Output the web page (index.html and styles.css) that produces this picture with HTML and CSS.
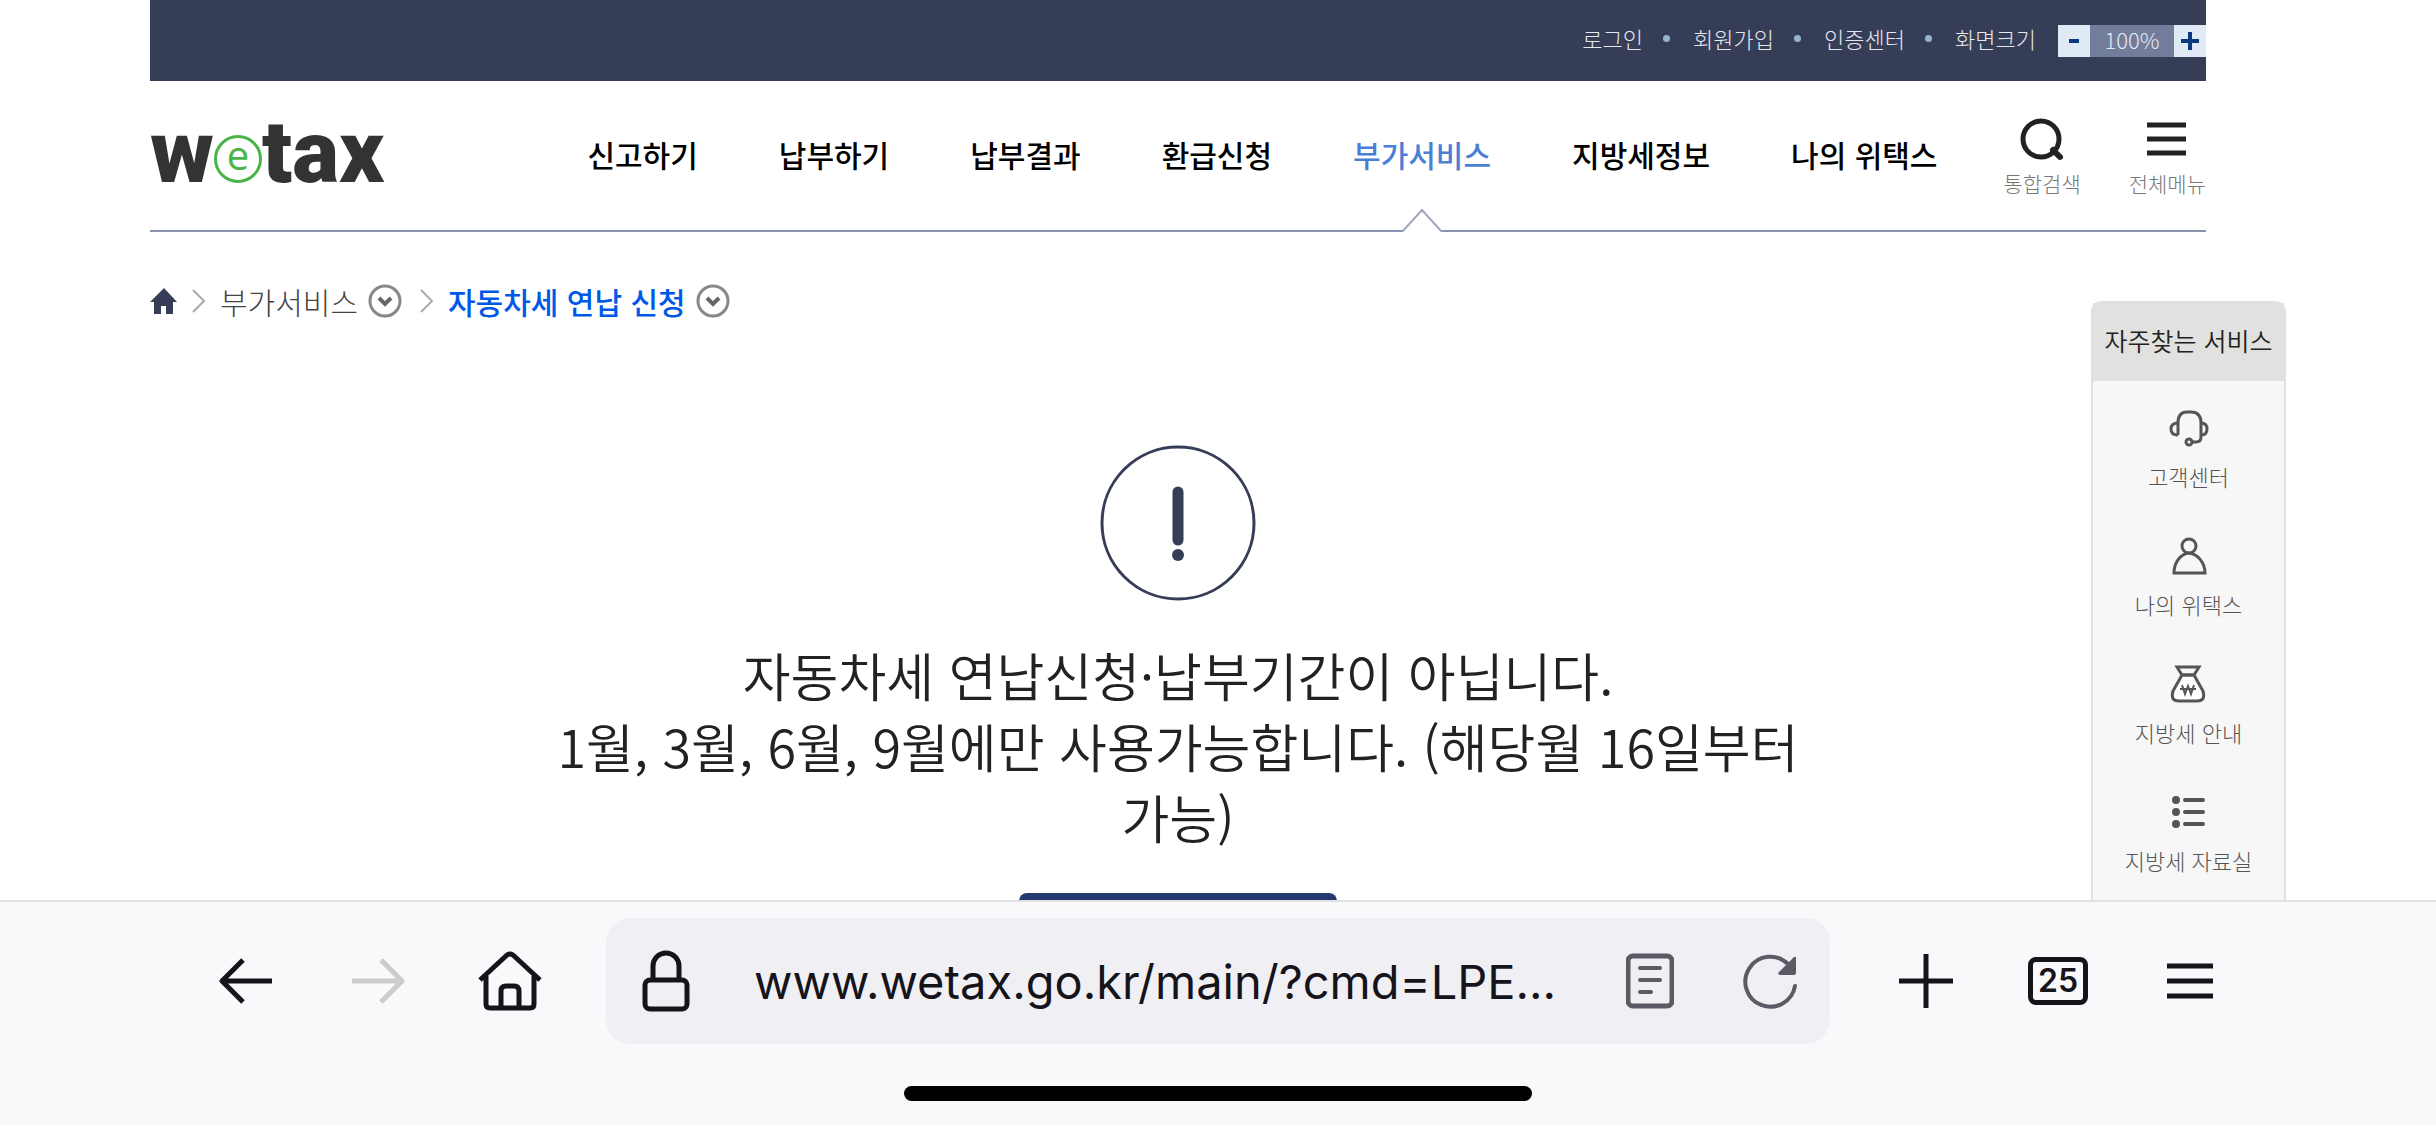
FILE: index.html
```html
<!DOCTYPE html>
<html lang="ko">
<head>
  <meta charset="UTF-8">
  <meta name="viewport" content="width=device-width, initial-scale=1">
  <title>위택스 - 자동차세 연납 신청</title>
  <link rel="stylesheet" href="styles.css">
</head>
<body>

  <div class="page">
    <div class="top-bar">
      <ul class="top-links">
        <li><a href="#">로그인</a></li>
        <li><a href="#">회원가입</a></li>
        <li><a href="#">인증센터</a></li>
        <li>화면크기</li>
      </ul>
      <div class="zoom-control">
        <button aria-label="축소"><svg width="12" height="32" viewBox="0 0 12 32"><path d="M1 16h10" stroke="#0b3a80" stroke-width="4"/></svg></button>
        <span>100%</span>
        <button aria-label="확대"><svg width="20" height="32" viewBox="0 0 20 32"><path d="M1 16h18M10 7v18" stroke="#0b3a80" stroke-width="4"/></svg></button>
      </div>
    </div>

    <header>
      <a href="#" class="logo" aria-label="wetax"><span>w</span><span class="logo-e">e</span><span>tax</span></a>
      <nav>
        <a href="#">신고하기</a>
        <a href="#">납부하기</a>
        <a href="#">납부결과</a>
        <a href="#">환급신청</a>
        <a href="#" class="active">부가서비스
          <svg class="marker" width="44" height="24" viewBox="0 0 44 24"><path d="M2 24L22 2l20 22" fill="#fff" stroke="#a0a6bd" stroke-width="2"/></svg>
        </a>
        <a href="#">지방세정보</a>
        <a href="#">나의 위택스</a>
      </nav>
      <div class="tools">
        <button>
          <svg width="46" height="44" viewBox="0 0 46 44" fill="none" stroke="#222" stroke-width="5"><circle cx="22" cy="21" r="18"/><path d="M34 32l7 7" stroke-width="6" stroke-linecap="round"/></svg>
          통합검색
        </button>
        <button>
          <svg width="40" height="44" viewBox="0 0 40 44" stroke="#222" stroke-width="5"><path d="M0 7h39M0 21h39M0 35h39"/></svg>
          전체메뉴
        </button>
      </div>
    </header>

    <div class="breadcrumb">
      <a href="#" class="home" aria-label="홈"><svg width="28" height="28" viewBox="0 0 28 28"><path d="M14 1L0 15h4v12h7v-8h5v8h7V15h4z" fill="#363d56"/></svg></a>
      <svg width="14" height="24" viewBox="0 0 14 24" fill="none" stroke="#aaa" stroke-width="2"><path d="M1 1l11 11L1 23"/></svg>
      <a href="#">부가서비스</a>
      <button aria-label="메뉴 열기"><svg width="34" height="34" viewBox="0 0 34 34" fill="none"><circle cx="17" cy="17" r="15" stroke="#888" stroke-width="3"/><path d="M11 14l6 6 6-6" stroke="#666" stroke-width="4"/></svg></button>
      <svg width="14" height="24" viewBox="0 0 14 24" fill="none" stroke="#aaa" stroke-width="2"><path d="M1 1l11 11L1 23"/></svg>
      <a href="#" class="current">자동차세 연납 신청</a>
      <button aria-label="메뉴 열기"><svg width="34" height="34" viewBox="0 0 34 34" fill="none"><circle cx="17" cy="17" r="15" stroke="#888" stroke-width="3"/><path d="M11 14l6 6 6-6" stroke="#666" stroke-width="4"/></svg></button>
    </div>

    <main>
      <svg width="156" height="156" viewBox="0 0 156 156" fill="none" stroke="#363d56"><circle cx="78" cy="78" r="76" stroke-width="3"/><path d="M78 47v48" stroke-width="11" stroke-linecap="round"/><circle cx="78" cy="110" r="6" fill="#363d56" stroke="none"/></svg>
      <p>자동차세 연납신청·납부기간이 아닙니다.<br>1월, 3월, 6월, 9월에만 사용가능합니다. (해당월 16일부터<br>가능)</p>
      <button class="confirm" aria-label="확인"></button>
    </main>

    <aside>
      <h2>자주찾는 서비스</h2>
      <ul>
        <li><a href="#">
          <svg width="40" height="38" viewBox="0 0 40 38" fill="none" stroke="#555" stroke-width="3"><path d="M9 26V14Q9 3 18 3h4q10 0 10 11v14q0 5-5 5h-4"/><path d="M9 14q-7 0-7 6t7 6M32 14q6 0 6 6t-6 6"/><circle cx="20" cy="33" r="3"/></svg>
          고객센터
        </a></li>
        <li><a href="#">
          <svg width="40" height="38" viewBox="0 0 40 38" fill="none" stroke="#555" stroke-width="3"><circle cx="20" cy="9" r="7"/><path d="M20 16C11 17 5 26 5 36h31C36 26 29 17 20 16z"/></svg>
          나의 위택스
        </a></li>
        <li><a href="#">
          <svg width="40" height="38" viewBox="0 0 40 38" fill="none" stroke="#555" stroke-width="3"><path d="M13 10L4 26q-3 10 6 10h18q9 0 6-10l-9-16z" fill="#fff"/><path d="M8 2h22l-5 8H13z"/><path d="M13 20l3 9 3-8 3 8 3-9M11 24h16" stroke-width="2"/></svg>
          지방세 안내
        </a></li>
        <li><a href="#">
          <svg width="40" height="38" viewBox="0 0 40 38"><path d="M16 7h18M16 19h18M16 31h18" stroke="#555" stroke-width="4" stroke-linecap="round"/><g fill="#555"><circle cx="7" cy="7" r="4"/><circle cx="7" cy="19" r="4"/><circle cx="7" cy="31" r="4"/></g></svg>
          지방세 자료실
        </a></li>
      </ul>
    </aside>
  </div>

  <!-- browser toolbar -->
  <div class="browser">
    <div class="controls">
      <button aria-label="뒤로"><svg width="54" height="48" viewBox="0 0 54 48" fill="none" stroke="#15141a" stroke-width="5" stroke-linejoin="round"><path d="M53 24H4M24 3L3 24l21 21"/></svg></button>
      <button aria-label="앞으로"><svg width="54" height="48" viewBox="0 0 54 48" fill="none" stroke="#ccc" stroke-width="5" stroke-linejoin="round"><path d="M1 24h49M30 3l21 21-21 21"/></svg></button>
      <button aria-label="홈"><svg width="64" height="60" viewBox="0 0 64 60" fill="none" stroke="#15141a" stroke-width="5" stroke-linejoin="round"><path d="M2 29L29 4q3-2 6 0l27 25"/><path d="M8 25v28q0 4 4 4h40q4 0 4-4V25M23 57V40q0-5 5-5h8q5 0 5 5v17"/></svg></button>
      <div class="url-box">
        <button aria-label="보안 연결"><svg width="48" height="62" viewBox="0 0 48 62" fill="none" stroke="#15141a" stroke-width="5"><rect x="3" y="30" width="42" height="29" rx="5"/><path d="M11 30V16a13 13 0 0 1 26 0v14"/></svg></button>
        <input type="text" aria-label="주소" value="www.wetax.go.kr/main/?cmd=LPE...">
        <button aria-label="읽기 모드"><svg width="48" height="56" viewBox="0 0 48 56" fill="none" stroke="#5b5b66"><rect x="2" y="3" width="44" height="50" rx="5" stroke-width="5"/><path d="M14 15h20M14 27h20M14 39h11" stroke-width="4" stroke-linecap="round"/></svg></button>
        <button aria-label="새로고침"><svg width="56" height="56" viewBox="0 0 56 56" fill="none"><path d="M53 33A25 25 0 1 1 46 11" stroke="#5b5b66" stroke-width="4" stroke-linecap="round"/><path d="M54 4v16q0 2-2 2H38q-3-1-1-3L52 4q2-1 2 1z" fill="#5b5b66"/></svg></button>
      </div>
      <button aria-label="새 탭"><svg width="54" height="54" viewBox="0 0 54 54" stroke="#15141a" stroke-width="5"><path d="M0 27h54M27 0v54"/></svg></button>
      <button aria-label="탭"><span class="tab-count">25</span></button>
      <button aria-label="메뉴"><svg width="46" height="38" viewBox="0 0 46 38" stroke="#15141a" stroke-width="5"><path d="M0 4h46M0 19h46M0 34h46"/></svg></button>
    </div>
    <div class="home-indicator"></div>
  </div>

</body>
</html>
```

FILE: styles.css
```css
* {
  box-sizing: border-box;
}

body {
  margin: 0;
  height: 100vh;
  display: flex;
  flex-direction: column;
  font-family: "Noto Sans CJK KR", sans-serif;
  background: #fff;
  color: #222;
}

a {
  color: inherit;
  text-decoration: none;
}

button {
  padding: 0;
  border: none;
  background: none;
  font: inherit;
  color: inherit;
  cursor: pointer;
}

svg {
  display: block;
  flex: none;
}

ul {
  margin: 0;
  padding: 0;
  list-style: none;
}

.page {
  position: relative;
  flex: 1;
  min-height: 0;
  overflow: hidden;
  padding: 0 230px 0 150px;
}

.top-bar {
  display: flex;
  justify-content: flex-end;
  align-items: center;
  gap: 22px;
  height: 81px;
  background: #363d56;
  color: #e6e8ee;
  font-size: 22px;
  font-weight: 300;
}

.top-links {
  display: flex;
  padding-bottom: 5px;
}

.top-links li {
  display: flex;
  align-items: center;
}

.top-links li + li::before {
  content: "";
  width: 7px;
  height: 7px;
  margin: 0 23px 0 20px;
  border-radius: 50%;
  background: #96b2cd;
}

.zoom-control {
  display: flex;
  height: 32px;
  line-height: 28px;
  background: #727d9b;
}

.zoom-control button {
  display: flex;
  justify-content: center;
  width: 32px;
  background: #e0eaf5;
}

.zoom-control span {
  width: 84px;
  text-align: center;
}

header {
  display: flex;
  align-items: center;
  height: 151px;
  border-bottom: 2px solid #8a92ae;
}

.logo {
  display: flex;
  align-items: center;
  margin-bottom: 8px;
  font-family: Roboto, sans-serif;
  font-size: 88px;
  font-weight: 900;
  line-height: 100px;
  color: #333;
}

.logo-e {
  width: 48px;
  height: 48px;
  margin-top: 14px;
  border: 3px solid #49b549;
  border-radius: 50%;
  font-family: "Open Sans", sans-serif;
  font-size: 40px;
  font-weight: 500;
  line-height: 34px;
  text-align: center;
  color: #49b549;
}

nav {
  display: flex;
  gap: 81px;
  align-self: stretch;
  margin-left: auto;
  font-size: 30px;
  font-weight: 500;
  line-height: 147px;
  color: #000;
}

nav a {
  position: relative;
}

nav .active {
  color: #4a7fd4;
}

.marker {
  position: absolute;
  left: 50%;
  bottom: -2px;
  margin-left: -22px;
}

.tools {
  display: flex;
  gap: 48px;
  margin-left: 66px;
  padding-top: 6px;
}

.tools button {
  display: flex;
  flex-direction: column;
  align-items: center;
  gap: 5px;
  font-size: 21px;
  font-weight: 300;
  line-height: 32px;
  color: #777;
}

.breadcrumb {
  display: flex;
  align-items: center;
  gap: 14px;
  margin-top: 49px;
  font-size: 30px;
  font-weight: 300;
  line-height: 40px;
  color: #444;
}

.breadcrumb button {
  margin: 0 4px 0 -4px;
}

.breadcrumb .current {
  font-weight: 500;
  color: #0058e6;
}

main {
  display: flex;
  flex-direction: column;
  align-items: center;
  margin-top: 124px;
}

main p {
  margin: 38px 0 41px;
  font-size: 52px;
  font-weight: 350;
  line-height: 71px;
  text-align: center;
}

.confirm {
  width: 318px;
  height: 90px;
  border-radius: 8px;
  background: #22386f;
}

aside {
  position: absolute;
  top: 301px;
  right: 150px;
  width: 195px;
  height: 900px;
  border: 2px solid #e1e1e1;
  border-radius: 10px;
  background: #f7f7f7;
  text-align: center;
}

aside h2 {
  margin: 0;
  padding-bottom: 4px;
  background: #e1e1df;
  font-size: 25px;
  font-weight: 350;
  line-height: 74px;
  white-space: nowrap;
}

aside ul {
  display: flex;
  flex-direction: column;
  gap: 45px;
  padding-top: 28px;
  font-size: 22px;
  font-weight: 300;
  line-height: 32px;
  color: #555;
}

aside a {
  display: flex;
  flex-direction: column;
  align-items: center;
  gap: 13px;
}

.browser {
  padding: 16px 180px 24px;
  border-top: 2px solid #e0e0e6;
  background: #f9f9fb;
  color: #15141a;
  font-family: Inter, sans-serif;
}

.controls {
  display: flex;
  align-items: center;
}

.controls button {
  display: flex;
  justify-content: center;
  align-items: center;
  width: 132px;
}

.url-box {
  flex: 1;
  display: flex;
  align-items: center;
  min-width: 0;
  height: 126px;
  margin: 0 30px;
  border-radius: 24px;
  background: #f0eff4;
}

.controls .url-box button {
  width: 120px;
}

.url-box input {
  flex: 1;
  min-width: 0;
  padding: 0 0 0 28px;
  border: none;
  outline: none;
  background: none;
  color: inherit;
  font-family: inherit;
  font-size: 47px;
}

.tab-count {
  width: 60px;
  height: 48px;
  border: 5px solid #15141a;
  border-radius: 8px;
  font-size: 32px;
  font-weight: 600;
  line-height: 38px;
}

.home-indicator {
  width: 628px;
  height: 15px;
  margin: 42px auto 0;
  border-radius: 8px;
  background: #000;
}
```
